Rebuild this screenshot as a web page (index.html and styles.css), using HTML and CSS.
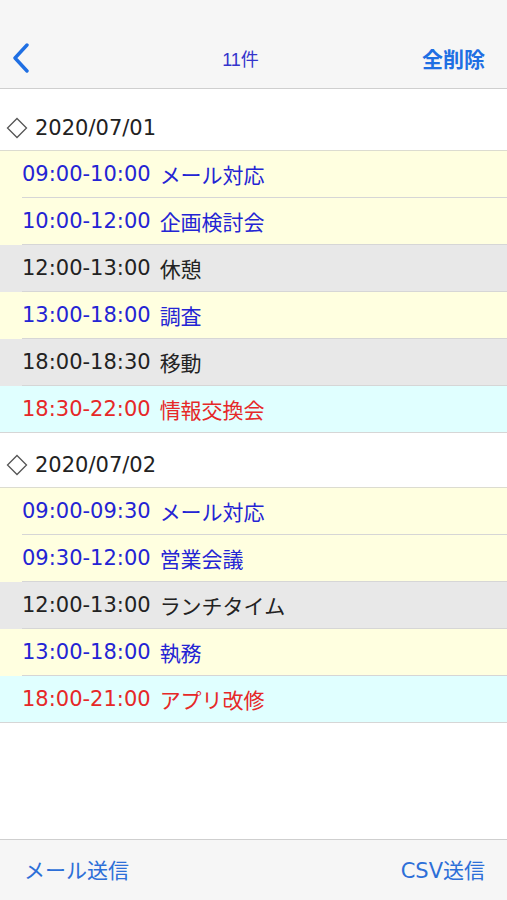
FILE: index.html
```
<!DOCTYPE html>
<html lang="ja">
<head>
<meta charset="utf-8">
<link rel="stylesheet" href="styles.css">
</head>
<body>
<div class="screen">
  <header class="nav">
    <div class="nav-left">
      <svg class="chevron" width="20" height="30" viewBox="0 0 20 30"><path d="M16 2 L4 15 L16 28" fill="none" stroke="#1f6fe3" stroke-width="3.4" stroke-linecap="round" stroke-linejoin="round"/></svg>
    </div>
    <div class="nav-title">11件</div>
    <div class="nav-right">全削除</div>
  </header>
  <main class="list">
    <section class="section first">
      <h2 class="sec-head"><svg class="diamond" width="22" height="22" viewBox="0 0 22 22"><path d="M11 1.5 L20.5 11 L11 20.5 L1.5 11 Z" fill="none" stroke="#555" stroke-width="1.3"/></svg><span class="num">2020/07/01</span></h2>
      <ul class="rows">
        <li class="row yellow blue"><div class="cell"><span class="num">09:00-10:00</span><span class="jp">メール対応</span></div></li>
        <li class="row yellow blue"><div class="cell"><span class="num">10:00-12:00</span><span class="jp">企画検討会</span></div></li>
        <li class="row gray black"><div class="cell"><span class="num">12:00-13:00</span><span class="jp">休憩</span></div></li>
        <li class="row yellow blue"><div class="cell"><span class="num">13:00-18:00</span><span class="jp">調査</span></div></li>
        <li class="row gray black"><div class="cell"><span class="num">18:00-18:30</span><span class="jp">移動</span></div></li>
        <li class="row cyan red"><div class="cell"><span class="num">18:30-22:00</span><span class="jp">情報交換会</span></div></li>
      </ul>
    </section>
    <section class="section">
      <h2 class="sec-head"><svg class="diamond" width="22" height="22" viewBox="0 0 22 22"><path d="M11 1.5 L20.5 11 L11 20.5 L1.5 11 Z" fill="none" stroke="#555" stroke-width="1.3"/></svg><span class="num">2020/07/02</span></h2>
      <ul class="rows">
        <li class="row yellow blue"><div class="cell"><span class="num">09:00-09:30</span><span class="jp">メール対応</span></div></li>
        <li class="row yellow blue"><div class="cell"><span class="num">09:30-12:00</span><span class="jp">営業会議</span></div></li>
        <li class="row gray black"><div class="cell"><span class="num">12:00-13:00</span><span class="jp">ランチタイム</span></div></li>
        <li class="row yellow blue"><div class="cell"><span class="num">13:00-18:00</span><span class="jp">執務</span></div></li>
        <li class="row cyan red"><div class="cell"><span class="num">18:00-21:00</span><span class="jp">アプリ改修</span></div></li>
      </ul>
    </section>
  </main>
  <footer class="toolbar">
    <span class="tool">メール送信</span>
    <span class="tool"><span class="num">CSV</span>送信</span>
  </footer>
</div>
</body>
</html>
```
FILE: styles.css
```
* { box-sizing: border-box; }
html, body { margin: 0; padding: 0; }
body {
  font-family: "Noto Sans CJK JP", "Liberation Sans", sans-serif;
  background: #fff;
}
.screen {
  width: 507px;
  height: 900px;
  display: flex;
  flex-direction: column;
  overflow: hidden;
}
.nav {
  height: 89px;
  flex: none;
  background: #f6f6f6;
  border-bottom: 1px solid #cfcfcf;
  padding-top: 28px;
  display: flex;
  align-items: center;
}
.nav-left {
  width: 59px;
  padding-left: 11px;
  display: flex;
  align-items: center;
}
.chevron { display: block; }
.nav-title {
  flex: 1;
  text-align: center;
  font-family: "Liberation Sans", "Noto Sans CJK JP", sans-serif;
  font-size: 18px;
  color: #3434cc;
}
.nav-right {
  padding-right: 22px;
  font-size: 21px;
  font-weight: 700;
  color: #1f6fe3;
}
.list {
  flex: 1;
}
.num {
  font-family: "DejaVu Sans", "Noto Sans CJK JP", sans-serif;
}
.sec-head {
  margin: 0;
  height: 54px;
  padding: 0 0 4px 6px;
  display: flex;
  align-items: flex-end;
  gap: 7px;
  font-size: 21px;
  font-weight: 400;
  color: #222;
}
.section.first .sec-head {
  height: 61px;
}
.sec-head .diamond { margin-bottom: 7px; flex: none; }
.sec-head .num { line-height: 36px; }
.rows {
  list-style: none;
  margin: 0;
  padding: 0;
  border-top: 1px solid #dcdcd0;
  border-bottom: 1px solid #d6d6d6;
}
.row { font-size: 21px; }
.cell {
  margin-left: 22px;
  height: 47px;
  border-bottom: 1px solid #d6d6d6;
  display: flex;
  align-items: center;
  padding-bottom: 1px;
}
.jp { margin-left: 9px; }
.row:last-child .cell {
  height: 46px;
  border-bottom: none;
}
.yellow { background: #ffffe0; }
.gray { background: #e8e8e8; }
.cyan { background: #e0ffff; }
.blue { color: #2424d4; }
.black { color: #222; }
.red { color: #e62828; }
.toolbar {
  flex: none;
  height: 61px;
  background: #f6f6f6;
  border-top: 1px solid #cfcfcf;
  display: flex;
  justify-content: space-between;
  align-items: center;
  padding: 0 22px 2px 24px;
  font-size: 21px;
  color: #2d6fd8;
}
```
